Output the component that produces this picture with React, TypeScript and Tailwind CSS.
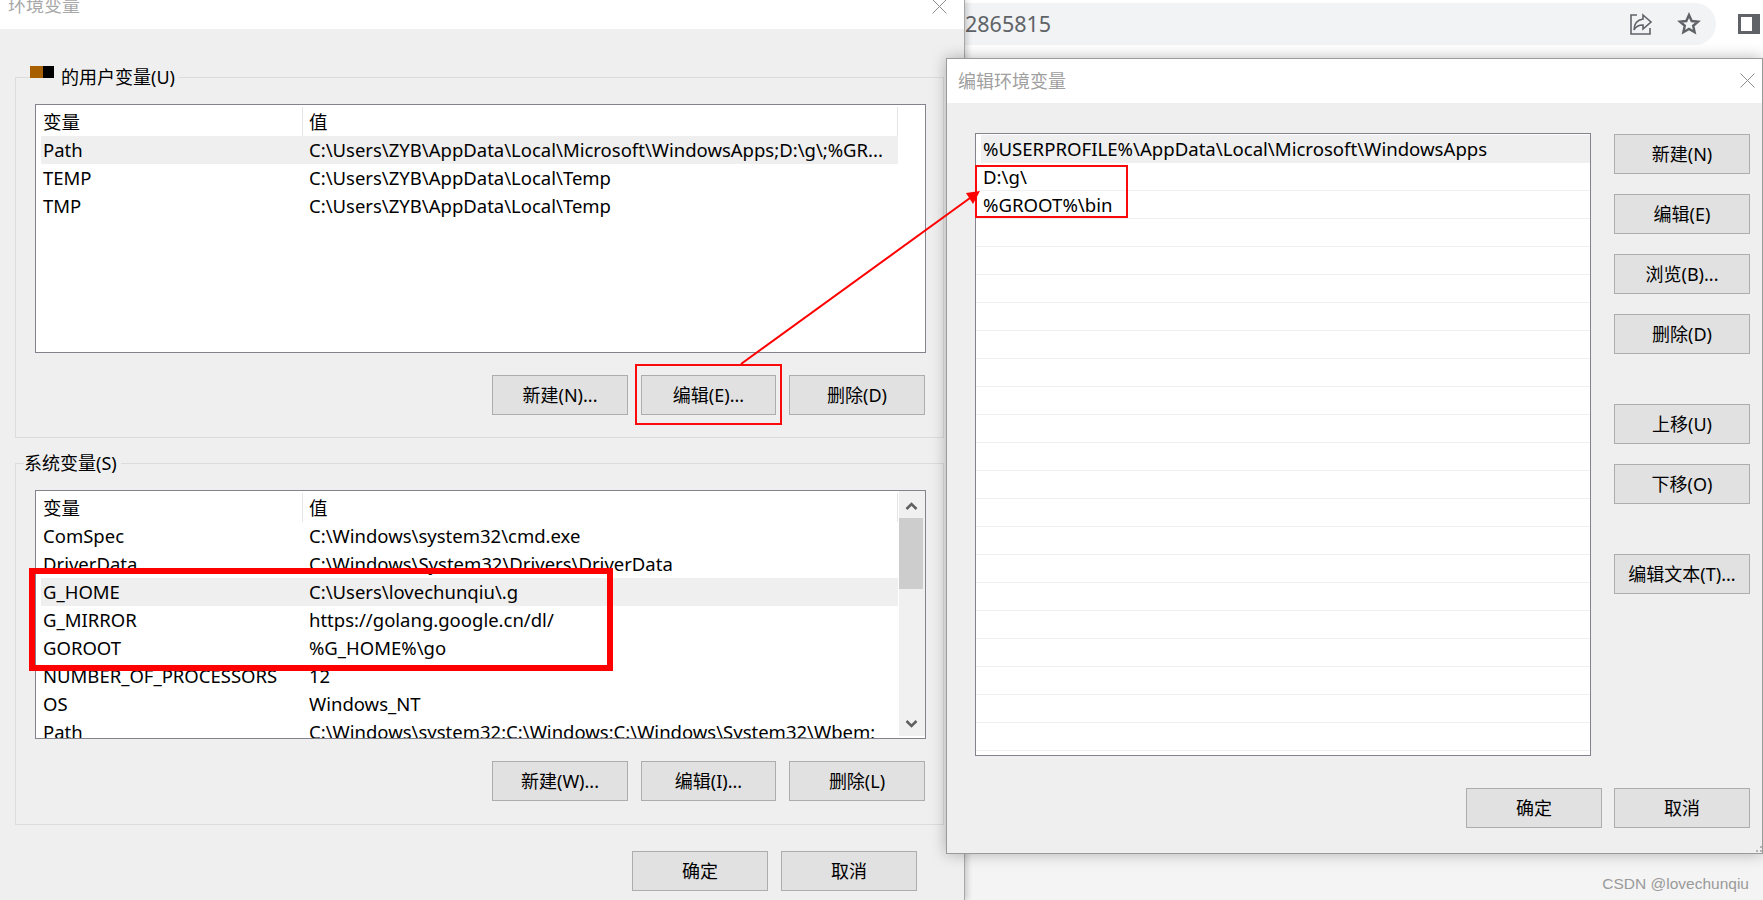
const uiFont = "font-['Noto_Sans','Noto_Sans_CJK_SC',sans-serif]";

const userRows = [
  { name: "Path", value: "C:\\Users\\ZYB\\AppData\\Local\\Microsoft\\WindowsApps;D:\\g\\;%GR...", selected: true },
  { name: "TEMP", value: "C:\\Users\\ZYB\\AppData\\Local\\Temp" },
  { name: "TMP", value: "C:\\Users\\ZYB\\AppData\\Local\\Temp" },
];

const systemRows = [
  { name: "ComSpec", value: "C:\\Windows\\system32\\cmd.exe" },
  { name: "DriverData", value: "C:\\Windows\\System32\\Drivers\\DriverData" },
  { name: "G_HOME", value: "C:\\Users\\lovechunqiu\\.g", selected: true },
  { name: "G_MIRROR", value: "https://golang.google.cn/dl/" },
  { name: "GOROOT", value: "%G_HOME%\\go" },
  { name: "NUMBER_OF_PROCESSORS", value: "12" },
  { name: "OS", value: "Windows_NT" },
  { name: "Path", value: "C:\\Windows\\system32;C:\\Windows;C:\\Windows\\System32\\Wbem;" },
];

const pathRows = ["%USERPROFILE%\\AppData\\Local\\Microsoft\\WindowsApps", "D:\\g\\", "%GROOT%\\bin"];

function Btn({ label, className = "w-[136px]" }: { label: string; className?: string }) {
  return (
    <button className={`h-10 shrink-0 border border-[#adadad] bg-[#e1e1e1] text-[18px] leading-none text-black ${className}`}>
      {label}
    </button>
  );
}

function Close({ className = "" }: { className?: string }) {
  return (
    <svg width="15" height="15" viewBox="0 0 15 15" className={`absolute ${className}`}>
      <path d="M0.5 0.5L14.5 14.5M14.5 0.5L0.5 14.5" stroke="#8c8c8c" strokeWidth="1" fill="none" />
    </svg>
  );
}

function VarRow({ name, value, selected }: { name: string; value: string; selected?: boolean }) {
  return (
    <div className={`ml-[5px] flex h-7 w-[857px] shrink-0 items-center text-[18.5px] text-black ${selected ? "bg-[#efefef]" : ""}`}>
      <span className="ml-[2px] w-[266px] shrink-0 whitespace-nowrap">{name}</span>
      <span className="whitespace-nowrap">{value}</span>
    </div>
  );
}

function VarHeader() {
  return (
    <div className="flex h-[31px] w-[862px] shrink-0 items-center pt-[2px] text-[18.5px] text-black">
      <span className="ml-[7px] w-[259px] shrink-0">变量</span>
      <span className="flex h-full flex-1 items-center border-x border-[#e5e5e5] pl-[6px]">值</span>
    </div>
  );
}

function EnvWindow() {
  return (
    <div className="absolute left-0 top-0 flex h-[900px] w-[965px] flex-col border-r border-[#a8a8a8] bg-[#efefef] shadow-[2px_0_6px_rgba(0,0,0,0.2)]">
      <div className="relative h-[29px] shrink-0 overflow-hidden bg-white">
        <span className="absolute left-[8px] top-[-7px] text-[18px] leading-[24px] text-[#a8a8a8]">环境变量</span>
        <Close className="left-[932px] top-[-1px]" />
      </div>

      <div className="relative ml-[15px] mt-[48px] h-[361px] w-[929px] shrink-0 border border-[#dcdcdc] px-[19px] pt-[26px]">
        <div className="absolute left-[14px] top-[-13px] flex h-6 items-center bg-[#efefef] pr-[4px] text-[18px] text-black">
          <span className="mr-[7px] flex h-3 w-[24px] -translate-y-[5px]">
            <span className="w-[13px] bg-[#a85f00]" />
            <span className="w-[11px] bg-black" />
          </span>
          的用户变量(U)
        </div>
        <div className="h-[249px] w-[891px] border border-[#82838c] bg-white">
          <VarHeader />
          {userRows.map((row) => (
            <VarRow key={row.name} {...row} />
          ))}
        </div>
        <div className="-mr-[1px] mt-[22px] flex justify-end gap-[13px]">
          <Btn label="新建(N)..." />
          <Btn label="编辑(E)..." className="w-[135px]" />
          <Btn label="删除(D)" />
        </div>
      </div>

      <div className="relative ml-[15px] mt-[25px] h-[362px] w-[929px] shrink-0 border border-[#dcdcdc] px-[19px] pt-[26px]">
        <div className="absolute left-[8px] top-[-13px] flex h-6 items-center bg-[#efefef] pr-[4px] text-[18px] text-black">
          系统变量(S)
        </div>
        <div className="relative flex h-[249px] w-[891px] flex-col overflow-hidden border border-[#82838c] bg-white">
          <VarHeader />
          {systemRows.map((row) => (
            <VarRow key={row.name} {...row} />
          ))}
          <div className="absolute bottom-[2px] right-0 top-0 flex w-[26px] flex-col bg-[#f0f0f0]">
            <div className="flex h-[27px] shrink-0 items-center justify-center pr-[2px] pt-[3px]">
              <svg width="13" height="10" viewBox="0 0 13 10">
                <path d="M1.5 8L6.5 3L11.5 8" stroke="#606060" strokeWidth="2.5" fill="none" />
              </svg>
            </div>
            <div className="h-[71px] w-[24px] bg-[#cdcdcd]" />
            <div className="mt-auto mb-[7px] flex justify-center pr-[2px]">
              <svg width="13" height="10" viewBox="0 0 13 10">
                <path d="M1.5 2L6.5 7L11.5 2" stroke="#606060" strokeWidth="2.5" fill="none" />
              </svg>
            </div>
          </div>
        </div>
        <div className="-mr-[1px] mt-[22px] flex justify-end gap-[13px]">
          <Btn label="新建(W)..." />
          <Btn label="编辑(I)..." className="w-[135px]" />
          <Btn label="删除(L)" />
        </div>
      </div>

      <div className="ml-[632px] mt-[26px] flex gap-[13px]">
        <Btn label="确定" />
        <Btn label="取消" />
      </div>
    </div>
  );
}

function PathWindow() {
  const buttons = [
    { label: "新建(N)", mt: "mt-0" },
    { label: "编辑(E)", mt: "mt-5" },
    { label: "浏览(B)...", mt: "mt-5" },
    { label: "删除(D)", mt: "mt-5" },
    { label: "上移(U)", mt: "mt-[50px]" },
    { label: "下移(O)", mt: "mt-5" },
    { label: "编辑文本(T)...", mt: "mt-[50px]" },
  ];
  return (
    <div className="absolute left-[946px] top-[58px] flex h-[796px] w-[817px] flex-col border border-[#9a9a9a] bg-[#efefef] shadow-[0_0_14px_rgba(0,0,0,0.28)]">
      <div className="relative flex h-[44px] shrink-0 items-center bg-white pl-[11px] text-[18px] text-[#a0a0a0]">
        编辑环境变量
        <Close className="left-[793px] top-[14px]" />
      </div>
      <div className="flex pl-[28px] pt-[30px]">
        <div className="h-[623px] w-[616px] overflow-hidden border border-[#82838c] bg-white pt-[1px]">
          {Array.from({ length: 22 }).map((_, i) => (
            <div
              key={i}
              className={`flex h-7 items-center border-b border-[#f0f0f0] text-[18.6px] text-black ${i === 0 ? "ml-[5px] bg-[#efefef] pl-[2px]" : "pl-[7px]"}`}
            >
              {pathRows[i]}
            </div>
          ))}
        </div>
        <div className="ml-[23px] flex flex-col pt-[1px]">
          {buttons.map((b) => (
            <Btn key={b.label} label={b.label} className={`w-[136px] ${b.mt}`} />
          ))}
        </div>
      </div>
      <div className="mt-[32px] flex justify-end gap-[12px] pr-[12px]">
        <Btn label="确定" />
        <Btn label="取消" />
      </div>
      {/* resize grip */}
      <svg width="6" height="6" viewBox="0 0 6 6" className="absolute bottom-[1px] right-0">
        <path d="M4 0h2v2H4zM0 4h2v2H0zM4 4h2v2H4z" fill="#b4b4b4" />
      </svg>
    </div>
  );
}

function Annotations() {
  return (
    <>
      <div className="absolute left-[635px] top-[364px] h-[61px] w-[147px] border-2 border-[#fa0a0a]" />
      <div className="absolute left-[29px] top-[568px] h-[103px] w-[584px] border-[6px] border-[#ff0000]" />
      <div className="absolute left-[975px] top-[165px] h-[53px] w-[153px] border-2 border-[#fa0a0a]" />
      <svg width="1763" height="900" className="pointer-events-none absolute left-0 top-0">
        <path d="M741 364L970 198" stroke="#f00" strokeWidth="2" fill="none" />
        <path d="M980 191L966 193L973 204Z" fill="#f00" />
      </svg>
    </>
  );
}

export default function App() {
  return (
    <div className={`relative h-[900px] w-[1763px] overflow-hidden bg-[#f4f4f4] ${uiFont}`}>
      {/* browser behind the dialogs */}
      <div className="flex h-[58px] items-start bg-white pl-[965px] pt-[3px]">
        <div className="flex h-[42px] w-[751px] items-center rounded-r-[21px] bg-[#f1f3f4] pr-[15px] text-[21.5px] text-[#5f6368]">
          2865815
          <svg width="24" height="24" viewBox="0 0 24 24" fill="none" stroke="#5f6368" strokeWidth="1.6" className="ml-auto">
            <path d="M8 3H2v19h19v-6" />
            <path d="M14 3l8 7-8 7v-4c-4 0-7 1-9 5 0-6 3-10 9-11z" />
          </svg>
          <svg width="24" height="24" viewBox="0 0 24 24" fill="none" stroke="#5f6368" strokeWidth="2.4" className="ml-[24px]">
            <path d="M12 3l2.7 6 6.3.6-4.8 4.2 1.4 6.4L12 17l-5.6 3.2 1.4-6.4L3 9.6 9.3 9z" />
          </svg>
        </div>
        <div className="ml-[22px] mt-[11px] h-5 w-[22px] border-[3px] border-r-[8px] border-[#5f6368]" />
      </div>

      <EnvWindow />
      <PathWindow />
      <Annotations />

      <span className="absolute right-[14px] top-[872px] font-['Liberation_Sans',sans-serif] text-[15.5px] text-[#9a9a9a]">
        CSDN @lovechunqiu
      </span>
    </div>
  );
}
